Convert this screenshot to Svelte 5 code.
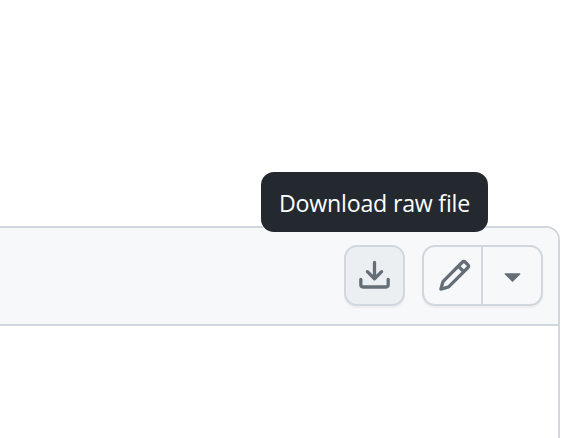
<script>
  const icons = {
    download: [
      'M2.75 14A1.75 1.75 0 0 1 1 12.25v-2.5a.75.75 0 0 1 1.5 0v2.5c0 .138.112.25.25.25h10.5a.25.25 0 0 0 .25-.25v-2.5a.75.75 0 0 1 1.5 0v2.5A1.75 1.75 0 0 1 13.25 14Z',
      'M7.25 7.689V2a.75.75 0 0 1 1.5 0v5.689l1.97-1.969a.749.749 0 1 1 1.06 1.06l-3.25 3.25a.749.749 0 0 1-1.06 0L4.22 6.78a.749.749 0 1 1 1.06-1.06l1.97 1.969Z'
    ],
    pencil: [
      'M11.013 1.427a1.75 1.75 0 0 1 2.474 0l1.086 1.086a1.75 1.75 0 0 1 0 2.474l-8.61 8.61c-.21.21-.47.364-.756.445l-3.251.93a.75.75 0 0 1-.927-.928l.929-3.25c.081-.286.235-.547.445-.758l8.61-8.61Zm.176 4.823L9.75 4.81l-6.286 6.287a.253.253 0 0 0-.064.108l-.558 1.953 1.953-.558a.253.253 0 0 0 .108-.064Zm1.238-3.763a.25.25 0 0 0-.354 0L10.811 3.75l1.439 1.44 1.263-1.263a.25.25 0 0 0 0-.354Z'
    ],
    caret: [
      'm4.427 7.427 3.396 3.396a.25.25 0 0 0 .354 0l3.396-3.396A.25.25 0 0 0 11.396 7H4.604a.25.25 0 0 0-.177.427Z'
    ]
  };
</script>

{#snippet icon(name)}
  <svg viewBox="0 0 16 16" aria-hidden="true">
    {#each icons[name] as d}<path {d} />{/each}
  </svg>
{/snippet}

<main>
  <section class="panel">
    <header>
      <div class="download">
        <button class="single" aria-label="Download raw file">{@render icon('download')}</button>
        <div class="tooltip" role="tooltip"><span>Download raw file</span></div>
      </div>
      <div class="group">
        <button class="edit" aria-label="Edit file">{@render icon('pencil')}</button>
        <button class="more" aria-label="More edit options">{@render icon('caret')}</button>
      </div>
    </header>
  </section>
</main>

<style>
  :global(body) {
    background: #fff;
  }
  main {
    box-sizing: border-box;
    height: 438px;
    padding: 226px 27px 0 0;
    overflow: hidden;
  }
  .panel {
    box-sizing: border-box;
    height: 240px;
    border: 2px solid #d0d7de;
    border-left: 0;
    border-radius: 0 14px 0 0;
  }
  header {
    box-sizing: border-box;
    height: 98px;
    padding: 17px 15px 0 0;
    display: flex;
    align-items: flex-start;
    justify-content: flex-end;
    gap: 17px;
    background: #f6f8fa;
    border-bottom: 2px solid #d0d7de;
    border-radius: 0 12px 0 0;
  }
  .download {
    position: relative;
  }
  button {
    box-sizing: border-box;
    display: flex;
    align-items: center;
    justify-content: center;
    height: 61px;
    margin: 0;
    padding: 0;
    color: #656d76;
    background: #f6f8fa;
    border: 2px solid #d0d7de;
    box-shadow: 0 2px 1px rgba(31, 35, 40, 0.05);
  }
  .single {
    width: 61px;
    background: #eceff2;
    border-radius: 13px;
  }
  .group {
    display: flex;
  }
  .edit {
    width: 61px;
    padding-left: 4px;
    border-radius: 13px 0 0 13px;
  }
  .more {
    width: 60px;
    border-left: 0;
    border-radius: 0 13px 13px 0;
  }
  svg {
    display: block;
    flex: none;
    width: 35px;
    height: 35px;
    fill: currentColor;
  }
  .tooltip {
    position: absolute;
    right: -83px;
    bottom: 74px;
    box-sizing: border-box;
    width: 227px;
    height: 60px;
    padding-top: 2px;
    display: flex;
    align-items: center;
    justify-content: center;
    border-radius: 13px;
    background: #24292f;
    color: #fff;
    font: 23.2px/34px "Open Sans", "Noto Sans", sans-serif;
    letter-spacing: -0.22px;
    white-space: nowrap;
  }
</style>
